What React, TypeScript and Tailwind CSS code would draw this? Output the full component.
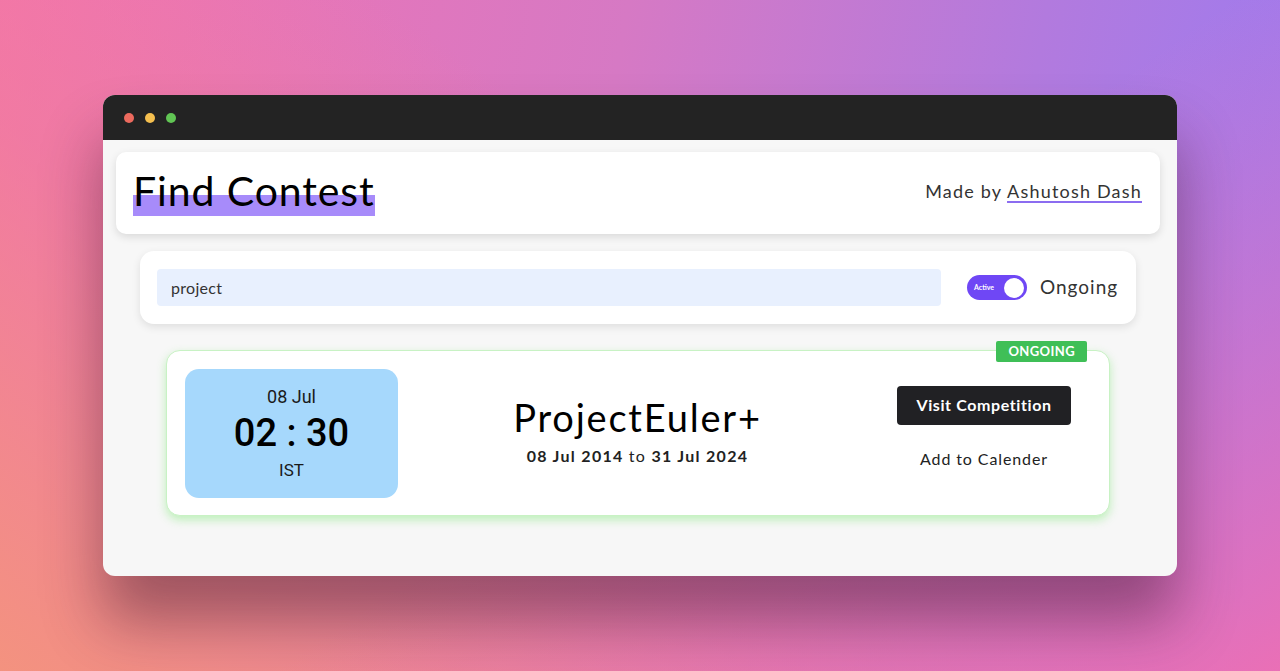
export default function App() {
    return (
        <div className="w-[1280px] h-[671px] overflow-hidden bg-[linear-gradient(100deg,#f472b0_0%,#d679c4_45%,#b27ade_75%,#9a7bf2_100%)] relative font-['Lato',sans-serif]">
            {/* warm tints at the bottom */}
            <div className="absolute inset-0 bg-[linear-gradient(35deg,rgba(244,148,124,0.95)_0%,rgba(240,128,150,0.55)_35%,rgba(240,120,170,0)_60%)]" />
            <div className="absolute inset-0 bg-[linear-gradient(325deg,rgba(242,110,176,0.9)_0%,rgba(242,110,176,0)_45%)]" />

            <div className="relative pt-[95px] px-[103px]">
                <div className="w-[1074px] h-[481px] rounded-[12px] overflow-hidden bg-[#f7f7f7] shadow-[0_45px_60px_rgba(60,20,40,0.45)] flex flex-col">
                    {/* title bar */}
                    <div className="h-[45px] bg-[#232323] flex items-center gap-[11px] px-[21px]">
                        <span className="w-[10px] h-[10px] rounded-full bg-[#ec6a5e]" />
                        <span className="w-[10px] h-[10px] rounded-full bg-[#f4bf4f]" />
                        <span className="w-[10px] h-[10px] rounded-full bg-[#61c554]" />
                    </div>

                    <div className="flex-1 flex flex-col px-[13px] pt-[12px]">
                        {/* header */}
                        <div className="h-[82px] w-[1044px] bg-white rounded-[10px] shadow-[0_3px_8px_rgba(0,0,0,0.12)] flex items-center justify-between pl-[17px] pr-[18px]">
                            <h1 className="relative text-[41px] leading-none text-black tracking-[0.9px] mb-[6px]">
                                <span className="absolute left-0 right-0 bottom-[-5px] h-[21px] bg-[#a78bfa]" />
                                <span className="relative">Find Contest</span>
                            </h1>
                            <p className="text-[18px] text-[#333] tracking-[1.2px] mb-[4px]">
                                Made by{" "}
                                <span className="underline decoration-[#8b6cf0] decoration-2 underline-offset-[3px]">Ashutosh Dash</span>
                            </p>
                        </div>

                        {/* search bar */}
                        <div className="mt-[17px] ml-[24px] mr-[28px] h-[73px] bg-white rounded-[14px] shadow-[0_3px_8px_rgba(0,0,0,0.1)] flex items-center px-[17px]">
                            <div className="w-[784px] h-[37px] bg-[#e8f0fe] rounded-[4px] flex items-center pl-[14px] text-[16px] text-[#333] tracking-[0.3px]">
                                project
                            </div>
                            <div className="ml-[26px] w-[60px] h-[25px] rounded-full bg-[#6f47f5] flex items-center justify-between pl-[7px] pr-[3px]">
                                <span className="text-[7px] text-white font-bold">Active</span>
                                <span className="w-[20px] h-[20px] rounded-full bg-white" />
                            </div>
                            <span className="ml-[13px] text-[19px] text-[#333] tracking-[1px]">Ongoing</span>
                        </div>

                        {/* contest card */}
                        <div className="relative mt-[26px] ml-[50px] mr-[54px] h-[166px] bg-white rounded-[14px] border border-[#c8f2c4] shadow-[0_4px_10px_rgba(120,230,110,0.45)] flex items-center pl-[18px] pr-[38px]">
                            <span className="absolute right-[22px] top-[-10px] h-[21px] px-[12px] bg-[#3fbf57] rounded-[2px] text-white text-[13px] font-bold flex items-center tracking-[0.4px]">
                                ONGOING
                            </span>
                            <div className="w-[213px] h-[129px] bg-[#a6d8fc] rounded-[14px] flex flex-col items-center justify-center font-['Roboto',sans-serif] text-[#1a1a1a]">
                                <span className="text-[18px] leading-none">08 Jul</span>
                                <span className="text-[38px] leading-none font-medium mt-[8px] text-black">02 : 30</span>
                                <span className="text-[17px] leading-none mt-[10px]">IST</span>
                            </div>
                            <div className="flex-1 flex flex-col items-center pr-[20px]">
                                <span className="text-[38px] leading-none text-black tracking-[1.8px]">ProjectEuler+</span>
                                <span className="text-[16px] mt-[8px] text-[#222] font-bold tracking-[1.3px]">
                                    08 Jul 2014 <span className="font-normal">to</span> 31 Jul 2024
                                </span>
                            </div>
                            <div className="flex flex-col items-center gap-[22px] pb-[10px]">
                                <button className="w-[174px] h-[39px] bg-[#212124] rounded-[4px] text-white text-[16px] font-bold tracking-[0.6px]">
                                    Visit Competition
                                </button>
                                <span className="text-[16px] text-[#222] tracking-[0.9px]">Add to Calender</span>
                            </div>
                        </div>
                    </div>
                </div>
            </div>
        </div>
    );
}
